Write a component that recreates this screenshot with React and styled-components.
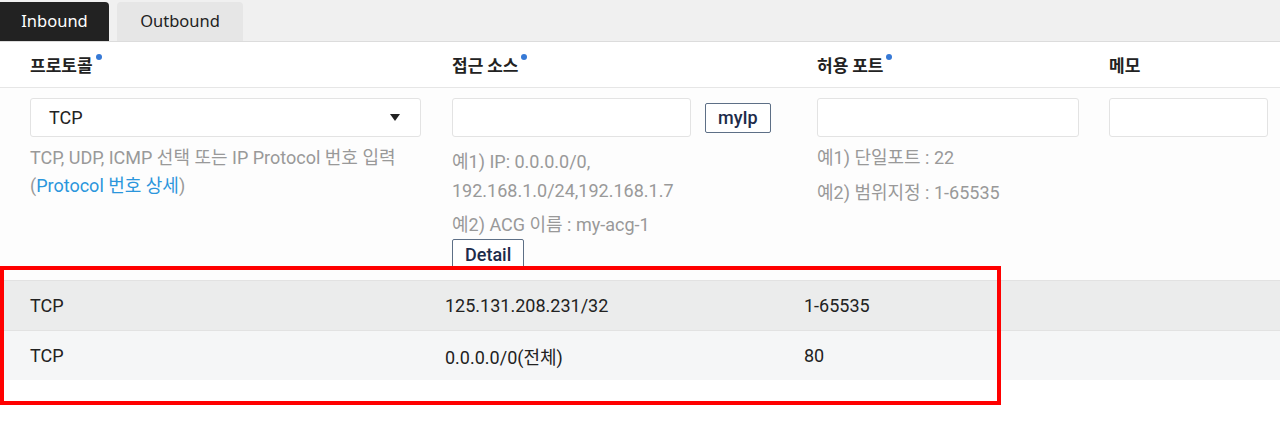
import React, { useState } from 'react';
import styled, { createGlobalStyle } from 'styled-components';

const GlobalStyle = createGlobalStyle`
  body {
    margin: 0;
    background: #ffffff;
    font-family: Roboto, "Noto Sans CJK KR", sans-serif;
    color: #222;
  }
`;

const rules = [
  { protocol: 'TCP', source: '125.131.208.231/32', port: '1-65535' },
  { protocol: 'TCP', source: '0.0.0.0/0(전체)', port: '80' },
];

const App = () => {
  const [tab, setTab] = useState('inbound');

  return (
    <>
      <GlobalStyle />
      <Page>
        <TabBar>
          <Tab active={tab === 'inbound'} onClick={() => setTab('inbound')}>
            Inbound
          </Tab>
          <Tab active={tab === 'outbound'} onClick={() => setTab('outbound')}>
            Outbound
          </Tab>
        </TabBar>

        <HeaderRow>
          <HeaderCell required>프로토콜</HeaderCell>
          <HeaderCell required>접근 소스</HeaderCell>
          <HeaderCell required>허용 포트</HeaderCell>
          <HeaderCell>메모</HeaderCell>
        </HeaderRow>

        <FormRow>
          <Field>
            <Select>
              <span>TCP</span>
              <Caret />
            </Select>
            <Help>
              TCP, UDP, ICMP 선택 또는 IP Protocol 번호 입력
              <br />(<HelpLink>Protocol 번호 상세</HelpLink>)
            </Help>
          </Field>
          <Field>
            <InputLine>
              <Input width="239px" />
              <SmallButton>myIp</SmallButton>
            </InputLine>
            <Help top="10px" lh="29px">
              예1) IP: 0.0.0.0/0,
              <br />
              192.168.1.0/24,192.168.1.7
            </Help>
            <Help top="6px">예2) ACG 이름 : my-acg-1</Help>
            <SmallButton>Detail</SmallButton>
          </Field>
          <Field>
            <Input width="262px" />
            <Help top="7px">예1) 단일포트 : 22</Help>
            <Help top="7px">예2) 범위지정 : 1-65535</Help>
          </Field>
          <Field>
            <Input width="159px" />
          </Field>
        </FormRow>

        <RuleList>
          {rules.map((rule, index) => (
            <RuleRow key={index} odd={index % 2 === 0}>
              <span>{rule.protocol}</span>
              <span>{rule.source}</span>
              <span>{rule.port}</span>
            </RuleRow>
          ))}
          <Highlight />
        </RuleList>
      </Page>
    </>
  );
};

const Page = styled.div`
  width: 1280px;
  height: 433px;
  overflow: hidden;
  background: #ffffff;
`;

const TabBar = styled.div`
  display: flex;
  align-items: flex-end;
  gap: 8px;
  height: 41px;
  background: #f0f0f0;
  border-bottom: 1px solid #dcdcdc;
`;

const Tab = styled.div`
  display: flex;
  align-items: center;
  justify-content: center;
  height: 39px;
  width: ${p => (p.active ? '109px' : '126px')};
  background: ${p => (p.active ? '#222222' : '#e6e6e6')};
  color: ${p => (p.active ? '#ffffff' : '#222222')};
  border-radius: ${p => (p.active ? '0 4px 0 0' : '4px 4px 0 0')};
  font-family: "Noto Sans", sans-serif;
  font-size: 16.5px;
  padding-bottom: 2px;
  box-sizing: border-box;
  cursor: pointer;
`;

const HeaderRow = styled.div`
  display: grid;
  grid-template-columns: 422px 365px 292px 1fr;
  align-items: center;
  height: 45px;
  padding-left: 30px;
  border-bottom: 1px solid #e6e6e6;
`;

const HeaderCell = styled.div`
  font-family: "Noto Sans CJK KR", sans-serif;
  font-weight: 700;
  font-size: 17px;
  color: #222;
  padding-bottom: 1px;

  &::after {
    content: ${p => (p.required ? "''" : 'none')};
    display: inline-block;
    width: 6px;
    height: 6px;
    margin-left: 3px;
    border-radius: 50%;
    background: #3679d6;
    vertical-align: 12px;
  }
`;

const FormRow = styled.div`
  box-sizing: border-box;
  display: grid;
  grid-template-columns: 422px 365px 292px 1fr;
  height: 192px;
  padding: 10px 0 0 30px;
  background: #fdfdfd;
`;

const Field = styled.div`
  display: flex;
  flex-direction: column;
  align-items: flex-start;
`;

const InputLine = styled.div`
  display: flex;
  align-items: center;
  gap: 14px;
`;

const Input = styled.div`
  box-sizing: border-box;
  width: ${p => p.width};
  height: 39px;
  background: #ffffff;
  border: 1px solid #e3e3e3;
  border-radius: 3px;
`;

const Select = styled.div`
  box-sizing: border-box;
  display: flex;
  align-items: center;
  justify-content: space-between;
  width: 391px;
  height: 39px;
  padding: 0 20px 0 18px;
  background: #ffffff;
  border: 1px solid #e3e3e3;
  border-radius: 3px;
  font-size: 18px;
  color: #222;
`;

const Caret = styled.span`
  width: 0;
  height: 0;
  border-left: 5.5px solid transparent;
  border-right: 5.5px solid transparent;
  border-top: 7px solid #222;
`;

const Help = styled.p`
  margin: ${p => p.top || '7px'} 0 0;
  font-size: 18px;
  line-height: ${p => p.lh || '28px'};
  color: #999999;
  white-space: nowrap;
`;

const HelpLink = styled.a`
  color: #2b96dc;
  cursor: pointer;
`;

const SmallButton = styled.button`
  box-sizing: border-box;
  height: 30px;
  padding: 0 12px;
  background: #ffffff;
  border: 1px solid #5d6f86;
  border-radius: 2px;
  font-family: Roboto, sans-serif;
  font-size: 18px;
  font-weight: 500;
  color: #1d2b4a;
  cursor: pointer;
`;

const RuleList = styled.div`
  position: relative;
`;

const RuleRow = styled.div`
  display: grid;
  grid-template-columns: 415px 359px 1fr;
  align-items: center;
  height: 49px;
  padding-left: 30px;
  border-top: 1px solid #e2e2e2;
  background: ${p => (p.odd ? '#ebecec' : '#f5f6f7')};
  font-size: 18px;
  color: #222;

  &:last-of-type {
    border-bottom: 1px solid #e2e2e2;
  }
`;

const Highlight = styled.div`
  position: absolute;
  left: 0;
  top: -14px;
  width: 1001px;
  height: 139px;
  box-sizing: border-box;
  border: 4px solid #ff0000;
  pointer-events: none;
`;

export default App;
